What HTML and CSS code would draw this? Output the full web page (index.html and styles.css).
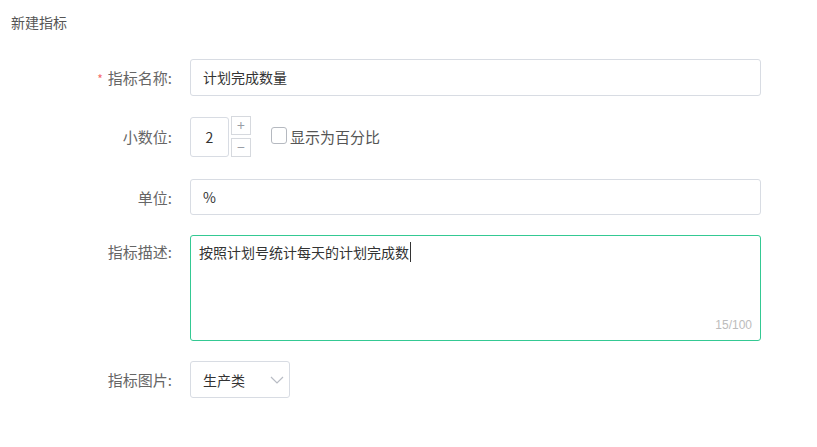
FILE: index.html
```html
<!DOCTYPE html>
<html lang="zh-CN">
<head>
  <meta charset="UTF-8" />
  <title>新建指标</title>
  <link rel="stylesheet" href="styles.css">
</head>
<body>
  <h2 class="title">新建指标</h2>

  <form class="form">
    <div class="row">
      <label class="label"><span class="req">*</span>指标名称:</label>
      <div class="input">计划完成数量</div>
    </div>

    <div class="row row-num">
      <label class="label">小数位:</label>
      <div class="num">2</div>
      <div class="spin">
        <span class="spin-btn">+</span>
        <span class="spin-btn">&minus;</span>
      </div>
      <span class="check"></span>
      <span class="check-text">显示为百分比</span>
    </div>

    <div class="row row-unit">
      <label class="label">单位:</label>
      <div class="input">%</div>
    </div>

    <div class="row row-top">
      <label class="label">指标描述:</label>
      <div class="textarea">
        <span class="caret">按照计划号统计每天的计划完成数</span>
        <span class="count">15/100</span>
      </div>
    </div>

    <div class="row">
      <label class="label">指标图片:</label>
      <div class="select">
        <span>生产类</span>
        <svg width="14" height="8" viewBox="0 0 14 8"><path d="M1 1l6 6 6-6" fill="none" stroke="#b8bcc4" stroke-width="1.2"/></svg>
      </div>
    </div>
  </form>
</body>
</html>
```

FILE: styles.css
```css
body {
  margin: 0;
  font-family: "Noto Sans CJK SC", "Noto Sans", sans-serif;
  font-size: 14px;
  color: #333;
  background: #fff;
}
.title {
  margin: 12px 0 0 11px;
  font-size: 14px;
  font-weight: normal;
  line-height: 20px;
  color: #555;
}
.form {
  margin-top: 27px;
  display: flex;
  flex-direction: column;
  gap: 20px;
}
.row {
  display: flex;
  align-items: center;
}
.row-top { align-items: flex-start; }
.row-num { margin-bottom: 2px; }
.label {
  width: 172px;
  margin-right: 18px;
  text-align: right;
  font-size: 15px;
  color: #666;
  flex-shrink: 0;
}
.row-top .label { line-height: 34px; }
.req {
  color: #f56c6c;
  margin-right: 5px;
  font-size: 12px;
}
.input {
  box-sizing: border-box;
  width: 571px;
  height: 37px;
  line-height: 35px;
  padding: 0 12px;
  border: 1px solid #d8dce3;
  border-radius: 3px;
}
.row-unit .input { height: 36px; line-height: 34px; }
.num {
  box-sizing: border-box;
  width: 39px;
  height: 40px;
  line-height: 38px;
  text-align: center;
  border: 1px solid #d8dce3;
  border-radius: 3px;
}
.spin {
  display: flex;
  flex-direction: column;
  gap: 3px;
  margin-left: 2px;
  align-self: center;
}
.spin-btn {
  box-sizing: border-box;
  width: 20px;
  height: 19px;
  line-height: 16px;
  text-align: center;
  border: 1px solid #d6d9de;
  color: #9a9ea6;
  font-size: 14px;
}
.check {
  box-sizing: border-box;
  width: 16px;
  height: 17px;
  margin-left: 20px;
  margin-top: -3px;
  border: 1px solid #b5b9c0;
  border-radius: 3px;
}
.check-text {
  margin-left: 3px;
  font-size: 15px;
  color: #555;
}
.textarea {
  box-sizing: border-box;
  position: relative;
  width: 571px;
  height: 106px;
  padding: 5px 8px;
  line-height: 22px;
  border: 1px solid #34c993;
  border-radius: 3px;
}
.caret {
  border-right: 1px solid #333;
  padding-right: 1px;
}
.count {
  position: absolute;
  right: 8px;
  bottom: 4px;
  font-size: 12px;
  color: #bcbcbc;
  font-family: "Liberation Sans", Arial, sans-serif;
}
.select {
  box-sizing: border-box;
  width: 100px;
  height: 37px;
  padding: 0 5px 0 12px;
  display: flex;
  align-items: center;
  justify-content: space-between;
  border: 1px solid #d8dce3;
  border-radius: 3px;
}
```
